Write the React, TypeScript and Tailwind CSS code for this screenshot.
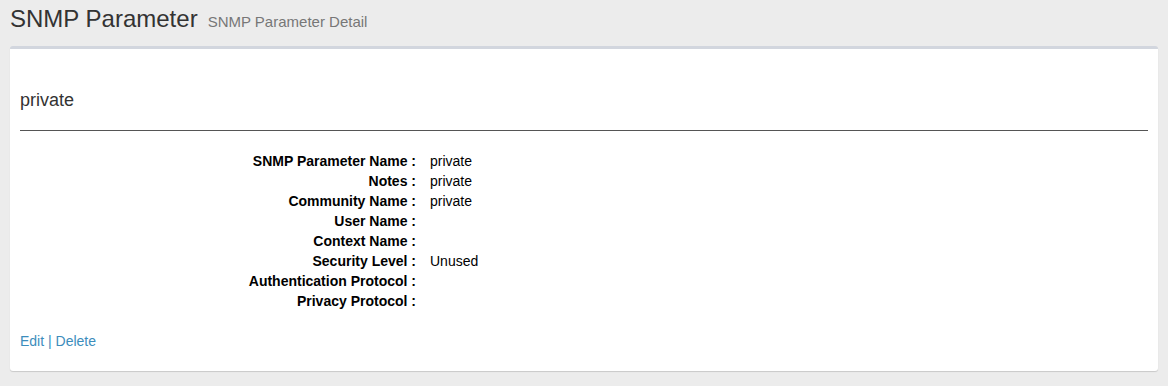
const ROWS: [string, string][] = [
  ["SNMP Parameter Name", "private"],
  ["Notes", "private"],
  ["Community Name", "private"],
  ["User Name", ""],
  ["Context Name", ""],
  ["Security Level", "Unused"],
  ["Authentication Protocol", ""],
  ["Privacy Protocol", ""],
];

export default function App() {
  return (
    <div className="min-h-screen bg-[#ececec] font-['Liberation_Sans',Arial,sans-serif] text-[#333]">
      <div className="flex items-baseline gap-[10px] px-[10px] pt-[6px] h-[46px]">
        <h1 className="text-[24px] leading-[26px]">SNMP Parameter</h1>
        <span className="text-[15px] text-[#777]">SNMP Parameter Detail</span>
      </div>

      <div className="mx-[10px] bg-white border-t-[3px] border-[#d2d6de] rounded-[3px] shadow-[0_1px_1px_rgba(0,0,0,0.15)] px-[10px] pt-[41px] pb-[20px]">
        <h3 className="text-[18px] leading-[20px]">private</h3>
        <hr className="mt-[20px] border-t border-[#555]" />

        <div className="mt-[20px] flex flex-col">
          {ROWS.map(([label, value]) => (
            <div key={label} className="flex h-[20px] items-center text-[14px] text-black">
              <div className="w-[396px] text-right font-bold">{label} :</div>
              <div className="pl-[14px]">{value}</div>
            </div>
          ))}
        </div>

        <div className="mt-[20px] text-[14px] leading-[20px] text-[#3c8dbc]">
          <a href="#">Edit</a> | <a href="#">Delete</a>
        </div>
      </div>
    </div>
  );
}
